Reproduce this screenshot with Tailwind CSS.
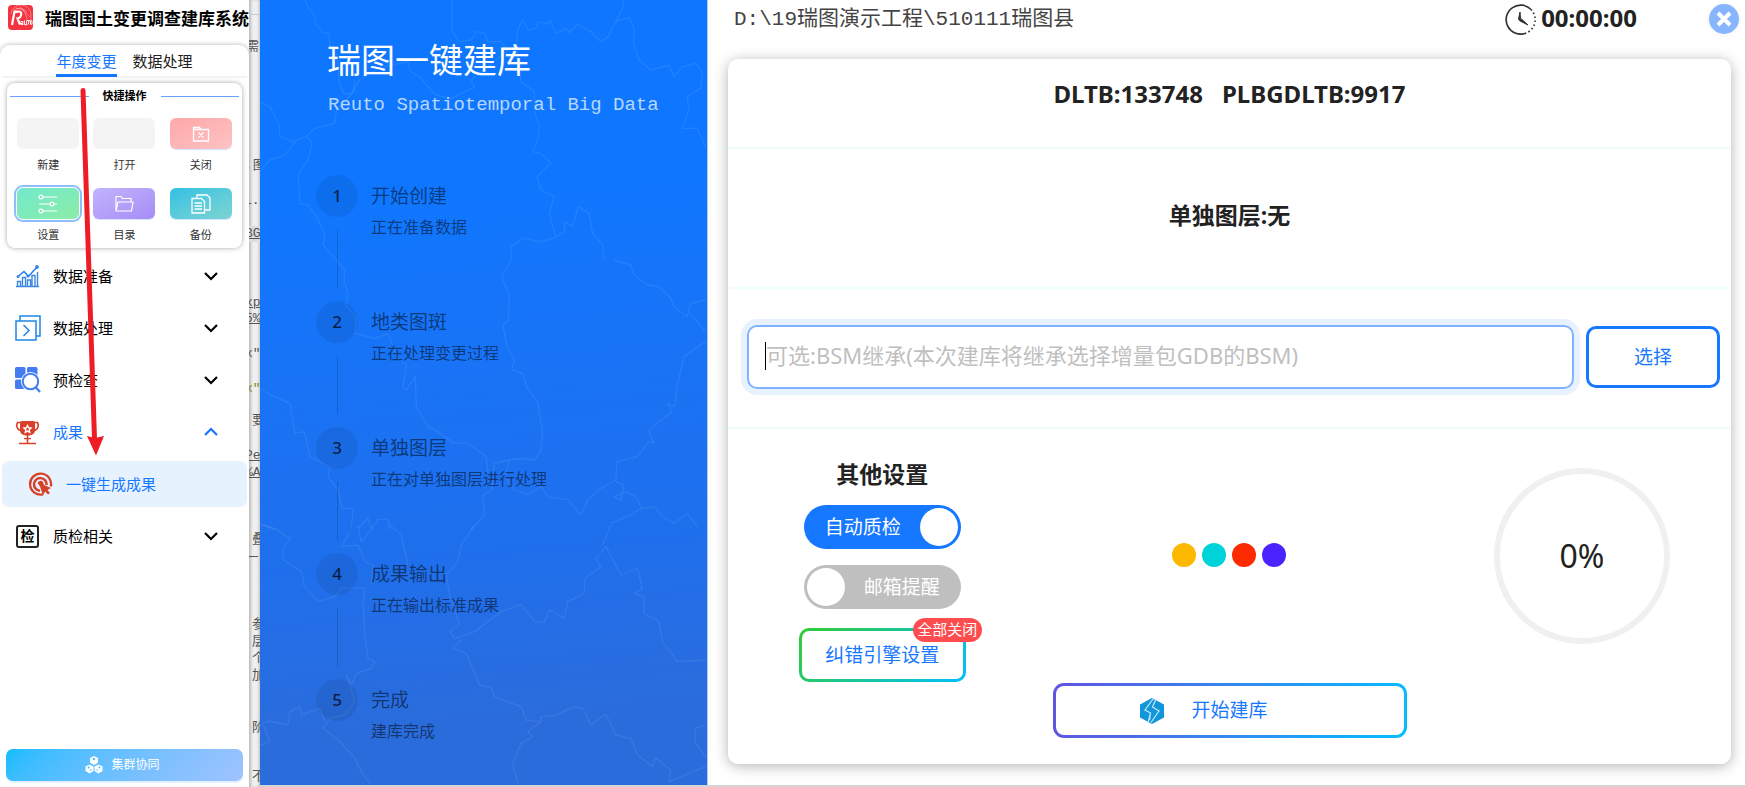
<!DOCTYPE html>
<html lang="zh-CN">
<head>
<meta charset="utf-8">
<title>瑞图国土变更调查建库系统</title>
<script src="https://cdn.jsdelivr.net/npm/@tailwindcss/browser@4"></script>
</head>
<body class="h-screen overflow-hidden bg-[#d4d4d4] font-['Noto_Sans','Noto_Sans_CJK_SC',sans-serif] text-black">
<div class="flex h-full">

  <!-- Sidebar -->
  <aside class="relative flex w-[249px] shrink-0 flex-col bg-white">
    <header class="flex h-[45px] shrink-0 items-start gap-[12px] pt-[5px] pl-[8px]">
      <svg class="size-[25px] shrink-0" viewBox="0 0 25 25"><rect width="25" height="25" rx="4" fill="#f5333f"/><g fill="none" stroke="#fff" stroke-opacity=".6" stroke-width=".6"><path d="M3 9a10 10 0 0 1 20 2a10 10 0 0 1-6 10M6 5c5-3 10-2 13 2M12 2c4 3 7 8 7 14M8 3c6 1 10 4 14 9"/></g><path d="M4 20l2.500-13.500h4.500q3 .5 2 4q-.8 2.600-3.500 3l2.500 6M6 7h4" fill="none" stroke="#fff" stroke-width="2.200"/><path d="M12.500 18.500h2.500v-2h-2v3h2.500M16.500 15.500v4h2v-4M19 15.500h3M20.500 15.500v4M22.500 15.800h1.500v3.500h-1.500z" fill="none" stroke="#fff" stroke-width=".9"/></svg>
      <h1 class="text-[17px] leading-[27px] font-bold whitespace-nowrap">瑞图国土变更调查建库系统</h1>
    </header>

    <div class="flex grow flex-col rounded-t-[10px] shadow-[0_0_5px_rgba(0,0,0,0.3)]">
      <nav class="mx-[2px] flex h-[33px] shrink-0 justify-center gap-4 border-b-2 border-[#f3f3f3] text-[15px]">
        <a href="#year" class="h-[32px] border-b-[3px] border-[#1677ff] pt-[2px] leading-[28px] text-[#1677ff]">年度变更</a>
        <a href="#data" class="h-[32px] pt-[2px] leading-[28px] text-[#222]">数据处理</a>
      </nav>

      <section class="mx-[7px] mt-[5px] shrink-0 rounded-[8px] px-[3px] pb-[5px] shadow-[0_0_5px_rgba(0,0,0,0.35)]">
        <div class="flex h-[26px] items-center gap-[14px]">
          <span class="h-px grow bg-[#69a5fb]"></span>
          <h2 class="text-[11px] leading-4 font-bold">快捷操作</h2>
          <span class="h-px grow bg-[#69a5fb]"></span>
        </div>
        <div class="mt-[9px] grid grid-cols-3 justify-items-center gap-y-[15px] text-[11px] leading-4 text-[#333]">
          <button class="flex flex-col items-center gap-[8px]"><span class="h-[31px] w-[62px] rounded-[6px] bg-[#f4f4f4]"></span>新建</button>
          <button class="flex flex-col items-center gap-[8px]"><span class="h-[31px] w-[62px] rounded-[6px] bg-[#f4f4f4]"></span>打开</button>
          <button class="flex flex-col items-center gap-[8px]"><span class="flex h-[31px] w-[62px] items-center justify-center rounded-[6px] bg-linear-to-br from-[#ffa8a8] to-[#fcc2c4] shadow-[0_1px_1px_#cfe3ff]"><svg class="size-[18px]" viewBox="0 0 18 18" fill="none" stroke="#fff" stroke-width="1.300"><path d="M1.500 16V2.500h6l1.500 2h7.500V16zM1.500 4.500H9M6.500 7.500l5 5M11.500 7.500l-5 5"/></svg></span>关闭</button>
          <button class="flex flex-col items-center gap-[8px]"><span class="flex h-[31px] w-[62px] items-center justify-center rounded-[6px] bg-linear-to-br from-[#71e9cd] to-[#8ceca6] shadow-[0_0_0_1px_#fff,0_0_0_3px_#8ebdfb]"><svg class="size-[20px]" viewBox="0 0 20 20" fill="none" stroke="#fff" stroke-width="1.200"><circle cx="3" cy="3" r="1.900"/><path d="M5 3h14M1 10h11M16 10h3M5 17h14"/><circle cx="14" cy="10" r="1.900"/><circle cx="3" cy="17" r="1.900"/></svg></span>设置</button>
          <button class="flex flex-col items-center gap-[8px]"><span class="flex h-[31px] w-[62px] items-center justify-center rounded-[6px] bg-linear-to-br from-[#c2b4fc] to-[#a68cf6] shadow-[0_1px_1px_#cfe3ff]"><svg class="size-[20px]" viewBox="0 0 20 20" fill="none" stroke="#fff" stroke-width="1.200" stroke-linejoin="round"><path d="M2 17V2.500h5l1.500 2H17V8M2 17L4 8h15l-1.500 9z"/></svg></span>目录</button>
          <button class="flex flex-col items-center gap-[8px]"><span class="flex h-[31px] w-[62px] items-center justify-center rounded-[6px] bg-linear-to-br from-[#2cc1e4] to-[#7cd4d0] shadow-[0_1px_1px_#cfe3ff]"><svg class="size-[20px]" viewBox="0 0 20 20" fill="none" stroke="#fff" stroke-width="1.300"><path d="M1 4.500h9.500l3 3V19H1zM3.500 9H11M3.500 12H11M3.500 15H11M6 4.500V1h10l3 3v12h-5.500"/></svg></span>备份</button>
        </div>
      </section>

      <nav class="mt-[5px] flex flex-col gap-[6px] px-[2px] text-[15px]">
        <a href="#prep" class="flex h-[46px] items-center pr-[29px] pl-[13px]"><svg class="mr-[13px] size-[25px]" viewBox="0 0 25 25" fill="none" stroke="#3b87e0" stroke-width="1.400"><path d="M1 22.500h23M2.500 22v-4.500H5.500V22M7.500 22v-8.500h3V22M12.500 22v-6h3v6M17 22V11.500h3V22M22.500 22V8"/><path d="M3 12.500l6-5 4.500 5L22 3" stroke="#1677ff"/><circle cx="3" cy="12.500" r=".8"/><circle cx="13" cy="12" r=".9"/><circle cx="22" cy="3" r="1.200" fill="#3b87e0"/></svg><span class="grow">数据准备</span><svg class="size-[14px]" viewBox="0 0 14 14" fill="none" stroke="currentColor" stroke-width="2.200"><path d="M1 4l6 6 6-6"/></svg></a>
        <a href="#process" class="flex h-[46px] items-center pr-[29px] pl-[13px]"><svg class="mr-[12px] size-[26px]" viewBox="0 0 26 26" fill="none" stroke="#1c86e8" stroke-width="1.500"><path d="M1 6h20v19H1zM5 6V1h20v20h-4M8.500 10l5.500 5.500L8.500 21"/></svg><span class="grow">数据处理</span><svg class="size-[14px]" viewBox="0 0 14 14" fill="none" stroke="currentColor" stroke-width="2.200"><path d="M1 4l6 6 6-6"/></svg></a>
        <a href="#precheck" class="flex h-[46px] items-center pr-[29px] pl-[13px]"><svg class="mr-[12px] size-[26px]" viewBox="0 0 26 26"><g fill="#447cf4"><rect width="10.500" height="11" rx="1.500"/><rect x="12" width="10.500" height="11" rx="1.500"/><rect y="12.500" width="10.500" height="9.500" rx="1.500"/></g><circle cx="15.500" cy="14.500" r="8" fill="#fff" stroke="#fff" stroke-width="3"/><circle cx="15.500" cy="14.500" r="7.700" fill="#fff" stroke="#447cf4" stroke-width="2"/><path d="M20.500 20l4.500 5" stroke="#447cf4" stroke-width="2.200"/></svg><span class="grow">预检查</span><svg class="size-[14px]" viewBox="0 0 14 14" fill="none" stroke="currentColor" stroke-width="2.200"><path d="M1 4l6 6 6-6"/></svg></a>
        <a href="#result" class="flex h-[46px] items-center pr-[29px] pl-[13px] text-[#1677ff]"><svg class="mr-[13px] size-[25px]" viewBox="0 0 25 25"><path d="M6 2.500H2.500C1 5 1.500 10 6.500 10.500M19 2.500h3.500c1.500 2.500 1 7.500-4 8" fill="none" stroke="#d9402a" stroke-width="1.600"/><path d="M7 1h11q2 0 2 2v7c0 4-3 5.500-7.500 5.500S5 14 5 10V3q0-2 2-2zM11.700 15h1.600v8h-1.600zM4 22.700h17v1.600H4zM9 18h7v1.300H9z" fill="#d9402a"/><path d="M12.500 5.500l1.100 2.300 2.400.3-1.800 1.700.5 2.500-2.200-1.200-2.200 1.200.5-2.500L9 8.100l2.400-.3z" fill="#d9402a" stroke="#fff" stroke-width="1.400"/></svg><span class="grow">成果</span><svg class="size-[14px]" viewBox="0 0 14 14" fill="none" stroke="currentColor" stroke-width="2.200"><path d="M1 10l6-6 6 6"/></svg></a>
        <a href="#generate" class="flex h-[46px] items-center gap-[13px] rounded-[7px] bg-[#e6f3ff] pl-[26px] text-[#1677ff]"><svg class="size-[25px]" viewBox="0 0 25 25"><path d="M15 22.300A10.500 10.500 0 1 1 22.800 14.500" fill="none" stroke="#d9402a" stroke-width="2.300"/><path d="M12 18.700A6.300 6.300 0 1 1 18.600 13" fill="none" stroke="#d9402a" stroke-width="2.500"/><path d="M9.500 11a3.200 3.200 0 0 1 5.500-1l1 3 7 3-3.500 2 2.500 3-2 1.500-3-3-2 4-3-9z" fill="#d9402a"/></svg>一键生成成果</a>
        <a href="#qc" class="flex h-[46px] items-center pr-[29px] pl-[14px]"><span class="mr-[14px] flex size-[23px] items-center justify-center rounded-[3px] border-2 border-[#222] text-[14px] leading-none font-bold">检</span><span class="grow">质检相关</span><svg class="size-[14px]" viewBox="0 0 14 14" fill="none" stroke="currentColor" stroke-width="2.200"><path d="M1 4l6 6 6-6"/></svg></a>
      </nav>

      <button class="mx-[6px] mt-auto mb-[6px] flex h-[32px] shrink-0 items-center justify-center gap-[8px] rounded-[7px] bg-linear-135 from-[#0bbcff] to-[#9fc2ff] pr-[4px] text-[12px] text-white shadow-[0_2px_1px_#e2f0ff]"><svg class="size-[18px]" viewBox="0 0 18 18" fill="#fff"><path d="M9 0l4 2v4.500L9 9 5 6.500V2zM4.500 8.500l4 2V15l-4 2.500-4-2.500v-4.500zM13.500 8.500l4 2V15l-4 2.500-4-2.500v-4.500z"/><g fill="#45c0ff"><circle cx="9" cy="3" r="1.200"/><circle cx="3.600" cy="11.500" r="1"/><circle cx="14.500" cy="11.500" r="1"/><circle cx="5.800" cy="14" r=".8"/><circle cx="12.300" cy="14" r=".8"/></g></svg>集群协同</button>
    </div>

    <!-- Guide arrow -->
    <svg class="pointer-events-none absolute top-[86px] left-[78px] z-10 h-[370px] w-[30px]" viewBox="0 0 30 370"><path d="M5 4.500L16.500 353" stroke="#ee1c25" stroke-width="5" stroke-linecap="round"/><path d="M9 350l8 2 9-2-8 19.500z" fill="#ee1c25"/></svg>
  </aside>

  <!-- Editor window visible between the two windows -->
  <div class="relative w-[11px] shrink-0 overflow-hidden bg-[#f0f0f0] font-['Liberation_Mono','Noto_Sans_CJK_SC',monospace] text-[13px] leading-4 whitespace-nowrap text-[#555] shadow-[inset_3px_0_3px_-1px_#bbb,inset_-2px_0_3px_-1px_#bbb]" aria-hidden="true">
    <span class="absolute top-[14px] left-0 h-px w-full bg-[#ccc]"></span>
    <span class="absolute top-[39px] -left-[3px]">需</span>
    <span class="absolute top-[158px] -left-[4px]">,图</span>
    <span class="absolute top-[193px] -left-[5px]">i.</span>
    <span class="absolute top-[226px] -left-[4px] bg-[#ddd] underline">BG</span>
    <span class="absolute top-[295px] -left-[4px] underline">xp</span>
    <span class="absolute top-[311px] -left-[4px] underline">5%</span>
    <span class="absolute top-[346px] -left-[4px]">x"</span>
    <span class="absolute top-[381px] -left-[4px] text-[#7f8c14]">x"</span>
    <span class="absolute top-[413px] left-[3px]">要</span>
    <span class="absolute top-[448px] -left-[4px] underline">Pe</span>
    <span class="absolute top-[465px] -left-[4px] underline">%A</span>
    <span class="absolute top-[532px] left-[3px]">叠</span>
    <span class="absolute top-[556px] left-0 h-px w-[9px] bg-[#555]"></span>
    <span class="absolute top-[617px] left-[3px]">参</span>
    <span class="absolute top-[634px] left-[3px]">层</span>
    <span class="absolute top-[651px] left-[3px]">个</span>
    <span class="absolute top-[668px] left-[3px]">加</span>
    <span class="absolute top-[720px] left-[3px]">阶</span>
    <span class="absolute top-[769px] left-[3px]">不</span>
  </div>

  <!-- Build window -->
  <div class="mr-px mb-[2px] flex grow bg-white">
    <section class="relative w-[448px] shrink-0 overflow-hidden border-r border-[#a9ccff] bg-linear-175 from-[#0f77ff] from-25% via-[#1f6fec] via-70% to-[#2a6cdc] to-90%">
      <svg class="absolute inset-0 size-full" viewBox="0 0 448 785" preserveAspectRatio="none" fill="none" stroke="#fff" stroke-opacity=".08" stroke-width="4" stroke-linejoin="round">
        <g transform="translate(-5 0) scale(.3333)">
          <path d="M150 0L162 25L178 45L182 70L205 98L222 100L225 135L250 190L252 240L265 280L290 282L310 245L340 220L390 200L460 185L465 212L500 235L520 260L545 285L590 296L620 280L660 262L650 240L700 200L760 150L785 145L790 90L805 60L822 90L845 85L852 65L880 72L888 62L905 100L935 85L945 98L970 72L1010 95L1040 125L1060 112L1085 65L1105 25L1108 0"/>
          <path d="M592 0V90L612 125L650 120L665 95L690 100L700 125L740 125L760 150M1085 65L1125 52L1140 85L1138 130L1155 180L1190 210L1245 195L1260 230L1285 200L1325 190L1345 215L1340 265L1300 290L1305 330L1285 385L1330 385L1355 440M788 150L800 245L840 275L842 340L855 380L850 420L835 455L858 460L890 490L848 530L860 570L900 590L885 640L905 712L930 695L932 665L955 680L972 620L1005 640L1015 700L1045 735L1050 780M905 712L860 725L808 715L770 740V780M15 308L45 320L72 375L75 410L115 425L155 408L180 385L240 370L245 330L275 300L298 270L300 240M155 408L172 430L160 480L130 520L135 610L160 615L190 660L210 700L205 735L245 780M15 515L45 480L90 465L120 425"/>
        </g>
        <g transform="translate(-5 260) scale(.3333)">
          <path d="M245 0L270 30L268 65L280 100L272 135L305 175L300 220L360 235L400 222L430 295L455 315L445 385L455 390L482 350L485 440L520 500L550 515L595 548L640 550L695 590L700 640M770 0L742 50L765 110L762 180L745 195L758 260L780 300L772 330L805 340L818 385L850 425L865 520L858 575L840 600L800 595L765 600L720 610L712 690L685 705L690 765L650 810M765 600L752 650L780 690L820 705L860 680L882 712L940 718L980 765L1000 720L1040 685L1085 660L1088 605L1150 590L1185 545L1200 550L1185 515L1215 485L1255 455L1240 430L1262 440L1270 375L1290 290L1355 245M1080 0L1130 15L1140 45L1180 75L1215 80L1250 115L1260 140L1300 170L1310 130L1355 120M1310 160L1355 215M1085 665L1110 675L1100 720L1078 710L1120 695L1150 715L1160 745L1130 765L1070 790M1160 745L1200 740L1225 770L1260 790L1300 760L1330 800M15 385L45 405L105 430L120 520L148 515L165 590L225 620L220 650L250 690L262 745L295 745L290 800M15 790L60 810M310 805L340 775L350 805L370 778H400L405 810"/>
        </g>
        <g transform="translate(-5 525) scale(.3333)">
          <path d="M20 0L60 10L105 40L85 70V105L140 140L148 185L190 230L240 215L260 188L330 190L325 230L330 330L340 400L360 410L350 430L305 445L290 480L275 450L300 530L270 570L225 580L205 610L260 655L300 700L320 740L345 775M310 0L318 50L355 10M285 20L260 65L310 60L330 110L355 120L350 180M405 0L440 30L460 120M660 0L620 60L610 110L575 150L585 210L600 250L615 300L585 320L600 340L660 320L740 260L800 238L840 290L870 292L885 255L930 280L940 230L990 205L992 160L1040 125L1025 100L1055 65L1100 150L1150 130L1165 190L1140 205L1170 215V265L1215 290L1225 350L1270 410L1355 405M1070 0L1045 60M620 345L595 370L635 385L675 480L710 488L720 515L800 545L815 585L860 590L860 575L900 572L960 545L985 550L1010 600L1055 568L1085 630L1130 640L1150 690L1195 725L1205 700L1250 735L1245 770L1355 725M860 590L820 620L835 635L800 655L785 690L775 720L790 775M15 600L40 588L100 600L105 560L135 545L140 570L195 550L210 590M15 660L45 650L25 600M1355 600L1325 610L1322 650L1355 695"/>
        </g>
      </svg>
      <div class="relative pt-[40px] pl-[56px]">
        <h2 class="pl-[11px] text-[34px] leading-[40px] text-white">瑞图一键建库</h2>
        <p class="pt-[13px] pl-[12px] font-['Liberation_Mono',monospace] text-[19px] leading-6 text-[#b7d6ff]">Reuto Spatiotemporal Big Data</p>
        <ol class="mt-[58px] text-black/50">
          <li class="flex h-[126px] gap-[13px]"><div class="flex w-[42px] flex-col items-center"><span class="flex size-[42px] items-center justify-center rounded-full bg-black/7 text-[17px] font-medium text-black/70">1</span><span class="mt-[13px] h-[58px] w-px bg-black/15"></span></div><div><h3 class="text-[19px] leading-[42px]">开始创建</h3><p class="text-[16px] leading-5">正在准备数据</p></div></li>
          <li class="flex h-[126px] gap-[13px]"><div class="flex w-[42px] flex-col items-center"><span class="flex size-[42px] items-center justify-center rounded-full bg-black/7 text-[17px] font-medium text-black/70">2</span><span class="mt-[13px] h-[58px] w-px bg-black/15"></span></div><div><h3 class="text-[19px] leading-[42px]">地类图斑</h3><p class="text-[16px] leading-5">正在处理变更过程</p></div></li>
          <li class="flex h-[126px] gap-[13px]"><div class="flex w-[42px] flex-col items-center"><span class="flex size-[42px] items-center justify-center rounded-full bg-black/7 text-[17px] font-medium text-black/70">3</span><span class="mt-[13px] h-[58px] w-px bg-black/15"></span></div><div><h3 class="text-[19px] leading-[42px]">单独图层</h3><p class="text-[16px] leading-5">正在对单独图层进行处理</p></div></li>
          <li class="flex h-[126px] gap-[13px]"><div class="flex w-[42px] flex-col items-center"><span class="flex size-[42px] items-center justify-center rounded-full bg-black/7 text-[17px] font-medium text-black/70">4</span><span class="mt-[13px] h-[58px] w-px bg-black/15"></span></div><div><h3 class="text-[19px] leading-[42px]">成果输出</h3><p class="text-[16px] leading-5">正在输出标准成果</p></div></li>
          <li class="flex gap-[13px]"><span class="flex size-[42px] items-center justify-center rounded-full bg-black/7 text-[17px] font-medium text-black/70">5</span><div><h3 class="text-[19px] leading-[42px]">完成</h3><p class="text-[16px] leading-5">建库完成</p></div></li>
        </ol>
      </div>
    </section>

    <main class="flex grow flex-col pr-[14px] pb-[21px] pl-[20px]">
      <header class="flex h-[59px] shrink-0 items-start pt-[4px] pl-[6px]">
        <p class="grow font-['Liberation_Mono','Noto_Sans_CJK_SC',monospace] text-[21px] leading-[32px] text-[#444]">D:\19瑞图演示工程\510111瑞图县</p>
        <svg class="mr-[5px] size-[31px]" viewBox="0 0 31 31" fill="none" stroke="#333"><path d="M20 29.500A14.500 14.500 0 1 1 26 5.500" stroke-width="1.700"/><path d="M26 5.500A14.500 14.500 0 0 1 20 29.500" stroke-width="1.700" stroke-dasharray="1.500 2.500"/><path d="M15 8l-1.500 7 1.500 2 8 4-6-5.500-1.500-1z" fill="#333"/></svg>
        <time class="text-[24px] leading-[28px] font-bold text-[#222]">00:00:00</time>
        <button aria-label="关闭窗口" class="-mr-[8px] ml-[72px] flex size-[30px] items-center justify-center rounded-full bg-[#88b5ff] shadow-[0_0_4px_#eee]"><svg class="size-[16px]" viewBox="0 0 16 16" stroke="#fff" stroke-width="4"><path d="M2 2l12 12M14 2L2 14"/></svg></button>
      </header>

      <div class="flex grow flex-col rounded-[10px] bg-white text-[#222] shadow-[0_2px_14px_rgba(0,0,0,0.3)]">
        <div class="flex justify-center gap-[19px] border-b-2 border-[#effdfb] pt-[18px] pb-[37px] text-[24px] leading-[33px] font-bold"><span>DLTB:133748</span><span>PLBGDLTB:9917</span></div>
        <div class="border-b-2 border-[#effdfb] pt-[50px] pb-[56px] text-center text-[23px] leading-8 font-bold">单独图层:无</div>
        <div class="flex items-center gap-[12px] border-b-2 border-[#effdfb] pt-[36px] pr-[11px] pb-[38px] pl-[19px]">
          <div class="relative grow">
            <input aria-label="BSM继承" placeholder="可选:BSM继承(本次建库将继承选择增量包GDB的BSM)" class="h-[64px] w-full rounded-[10px] border-2 border-[#7fb3ff] px-[17px] pb-[4px] text-[22px] shadow-[0_0_0_6px_#e8f2ff] outline-none placeholder:text-[#bfbfbf]">
            <span class="absolute top-[17px] left-[18px] h-[28px] w-px bg-black"></span>
          </div>
          <button class="h-[62px] w-[134px] rounded-[10px] border-3 border-[#1677ff] text-[19px] text-[#1677ff]">选择</button>
        </div>

        <div class="grid grow grid-cols-3">
          <div class="flex flex-col items-center pt-[29px] pr-[26px]">
            <h3 class="text-[23px] leading-8 font-bold">其他设置</h3>
            <label class="mt-[15px] flex h-[44px] w-[157px] items-center justify-between rounded-full bg-[#1677ff] pr-[3px] pl-[21px] text-[19px] text-white"><span>自动质检</span><input type="checkbox" checked class="size-[38px] appearance-none rounded-full bg-white"></label>
            <label class="mt-[16px] flex h-[44px] w-[157px] items-center justify-between rounded-full bg-[#bfbfbf] pr-[21px] pl-[3px] text-[19px] text-white"><input type="checkbox" class="size-[38px] appearance-none rounded-full bg-white"><span>邮箱提醒</span></label>
            <button class="relative mt-[19px] h-[54px] w-[167px] rounded-[10px] border-3 border-transparent text-[19px] text-[#1677ff] [background:linear-gradient(#fff,#fff)_padding-box,linear-gradient(135deg,#33cc33,#00bfff)_border-box]">纠错引擎设置<span class="absolute -top-[13px] -right-[19px] h-[24px] w-[69px] rounded-full bg-[#ff4d4f] text-[15px] leading-[23px] text-white">全部关闭</span></button>
          </div>
          <div class="flex flex-col items-center pt-[114px]">
            <div class="flex gap-[6px]" role="status" aria-label="等待中"><span class="size-[24px] rounded-full bg-[#ffb800]"></span><span class="size-[24px] rounded-full bg-[#00d2da]"></span><span class="size-[24px] rounded-full bg-[#ff2b00]"></span><span class="size-[24px] rounded-full bg-[#4a24ff]"></span></div>
            <button class="mt-[116px] flex h-[55px] w-[354px] items-center gap-[28px] rounded-[11px] border-3 border-transparent pl-[84px] text-[19px] text-[#1677ff] [background:linear-gradient(#fff,#fff)_padding-box,linear-gradient(100deg,#6253e1,#04befe)_border-box]"><svg class="h-[26px] w-[24px]" viewBox="0 0 24 26"><path d="M12 0l12 6.500v13L12 26 0 19.500v-13z" fill="#1296db"/><path d="M13 1L5 12l5.500 3L8 25M16 1l-3.500 8 6.500 4-8 11.500M13 1l3 0M10.500 15l-1 7" fill="none" stroke="#c9e9f8" stroke-width="1.200"/></svg>开始建库</button>
          </div>
          <div class="flex justify-center pt-[39px] pl-[36px]">
            <div class="flex size-[176px] items-center justify-center rounded-full border-6 border-[#f0f0f0] text-[32px]">0%</div>
          </div>
        </div>
      </div>
    </main>
  </div>
</div>
</body>
</html>
